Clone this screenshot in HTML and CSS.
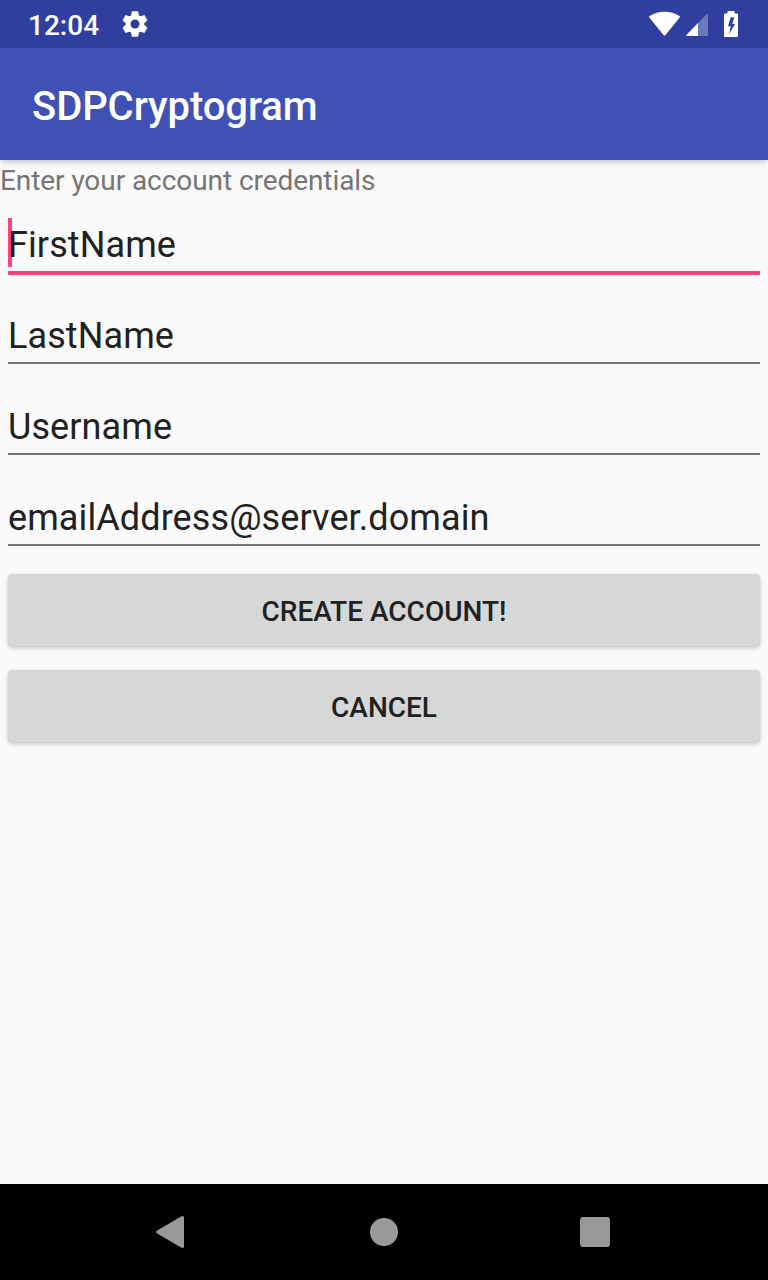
FILE: index.html
```html
<!DOCTYPE html>
<html lang="en">
<head>
<meta charset="utf-8">
<title>SDPCryptogram</title>
<link rel="stylesheet" href="styles.css">
</head>
<body>
<div class="screen">
  <div class="status-bar">
    <span class="clock">12:04</span>
    <svg class="gear" width="32" height="32" viewBox="-16 -16 32 32">
      <defs><mask id="hub"><rect x="-16" y="-16" width="32" height="32" fill="#fff"/><circle r="4.500" fill="#000"/></mask></defs>
      <g fill="#fff" mask="url(#hub)">
        <circle r="9.400"/>
        <path id="teeth" d="M-2.600 -12.700H2.600Q3.200 -12.700 3.300 -12L4 -8H-4L-3.300 -12Q-3.200 -12.700 -2.600 -12.700ZM-2.600 12.700H2.600Q3.200 12.700 3.300 12L4 8H-4L-3.300 12Q-3.200 12.700 -2.600 12.700Z"/>
        <use href="#teeth" transform="rotate(60)"/>
        <use href="#teeth" transform="rotate(120)"/>
      </g>
    </svg>
    <svg class="system" width="92" height="28" viewBox="648 10 92 28"><path fill="#fff" d="M649.300 17.400Q648.700 16.600 649.600 16Q656 11.700 664.500 11.700T679.400 16Q680.300 16.600 679.700 17.400L665.300 35.200Q664.500 36 663.700 35.200Z"/><path fill="#fff" fill-opacity=".3" d="M706.800 14.200Q708 13 708 14.600V36H698V23Z"/><path fill="#fff" d="M698 23V36H686.800Q685.400 36 686.400 34.900Z"/><path fill="#fff" fill-rule="evenodd" d="M727.500 11h7v2.500h2.700q.8 0 .8.800v21.900q0 .8-.8.800h-12.400q-.8 0-.8-.8V14.300q0-.8.8-.8H727.500ZM730.700 17.300L728 26.300H730.800L729 34.300L735 24H732.300L734.300 17.300Z"/></svg>
  </div>
  <header class="app-bar"><h1 class="title">SDPCryptogram</h1></header>
  <main class="content">
    <p class="prompt">Enter your account credentials</p>
    <div class="field focused"><span class="caret"></span><span class="value">FirstName</span></div>
    <div class="field"><span class="value">LastName</span></div>
    <div class="field"><span class="value">Username</span></div>
    <div class="field"><span class="value">emailAddress@server.domain</span></div>
    <button class="button">CREATE ACCOUNT!</button>
    <button class="button">CANCEL</button>
  </main>
  <nav class="nav-bar">
    <svg width="768" height="96" viewBox="0 0 768 96" fill="#999"><path d="M156.800 46.700L181.500 32.300Q184 31.200 184 33.800V62.200Q184 64.800 181.500 63.700L156.800 49.300Q155.200 48 156.800 46.700Z"/><circle cx="384" cy="48" r="14"/><rect x="580" y="33" width="30" height="30" rx="3"/></svg>
  </nav>
</div>
</body>
</html>
```
FILE: styles.css
```css
* { box-sizing: border-box; }
body { margin: 0; font-family: Roboto, sans-serif; background: #fafafa; }
.screen { width: 768px; height: 1280px; display: flex; flex-direction: column; overflow: hidden; }
.status-bar { height: 48px; background: #303f9f; display: flex; align-items: center; padding: 0 28px 0 28px; }
.clock { color: #fff; font-size: 28px; font-weight: 500; line-height: 32px; width: 70px; padding-top: 3px; white-space: nowrap; }
.gear { margin-left: 21px; }
.system { margin-left: auto; }
.app-bar { height: 112px; background: #3f51b5; display: flex; align-items: center; padding: 6px 32px 0; box-shadow: 0 4px 5px -1px rgba(0,0,0,.18); }
.title { margin: 0; color: #fff; font-size: 40px; line-height: 48px; font-weight: 500; letter-spacing: -.08px; }
.content { flex: 1; display: flex; flex-direction: column; }
.prompt { margin: 0; height: 38px; padding-top: 4px; font-size: 28px; line-height: 33px; letter-spacing: -.07px; color: #757575; }
.field { position: relative; height: 75px; margin: 0 8px 16px; border-bottom: 2px solid #757575; padding-top: 26px; color: #212121; font-size: 36px; line-height: 42px; letter-spacing: .1px; }
.focused { height: 77px; margin-bottom: 14px; border-bottom: 4px solid #ff4081; }
.value { position: relative; }
.caret { position: absolute; left: 0; top: 20px; width: 4px; height: 49px; background: #ff4081; }
.button { height: 72px; margin: 12px 8px; padding: 2px 0 0; border: 0; border-radius: 4px; background: #d6d7d7; color: #212121; font: 500 28px/33px Roboto, sans-serif; box-shadow: 0 0 1px rgba(0,0,0,.2), 0 2px 4px rgba(0,0,0,.2); }
.nav-bar { height: 96px; background: #000; }
.nav-bar svg { display: block; }
```
